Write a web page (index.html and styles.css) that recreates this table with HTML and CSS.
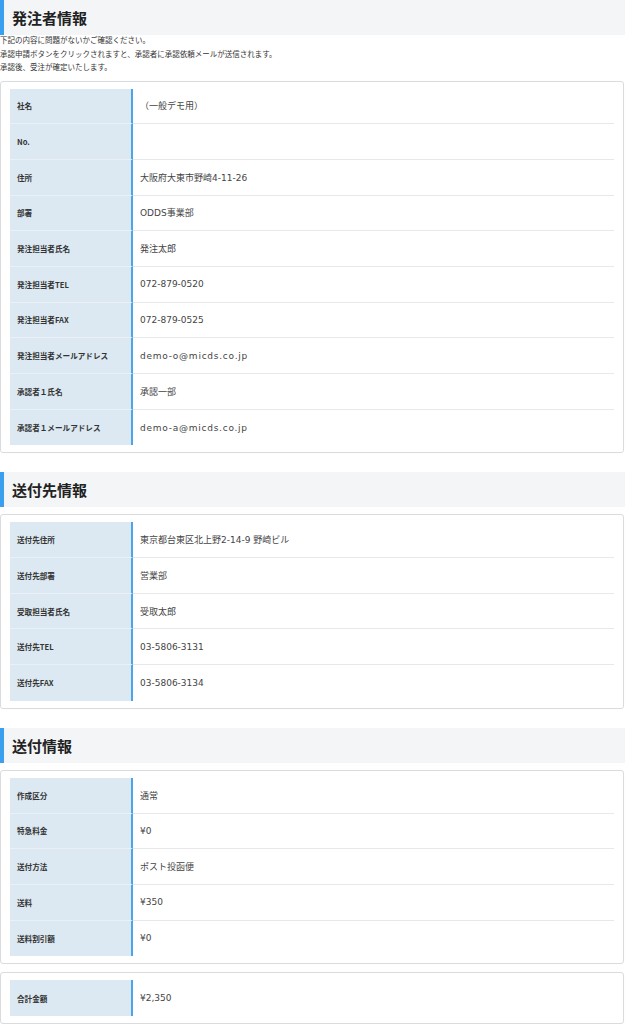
FILE: index.html
```html
<!DOCTYPE html>
<html lang="ja">
<head>
<meta charset="utf-8">
<title>確認</title>
<link rel="stylesheet" href="styles.css">
</head>
<body>
<section class="section">
  <h2 class="sec-title">発注者情報</h2>
  <div class="intro">
    <p>下記の内容に問題がないかご確認ください。</p>
    <p>承認申請ボタンをクリックされますと、承認者に承認依頼メールが送信されます。</p>
    <p>承認後、受注が確定いたします。</p>
  </div>
  <div class="card">
    <div class="row"><div class="label">社名</div><div class="value">（一般デモ用）</div></div>
    <div class="row"><div class="label">No.</div><div class="value"></div></div>
    <div class="row"><div class="label">住所</div><div class="value">大阪府大東市野崎4-11-26</div></div>
    <div class="row"><div class="label">部署</div><div class="value">ODDS事業部</div></div>
    <div class="row"><div class="label">発注担当者氏名</div><div class="value">発注太郎</div></div>
    <div class="row"><div class="label">発注担当者TEL</div><div class="value">072-879-0520</div></div>
    <div class="row"><div class="label">発注担当者FAX</div><div class="value">072-879-0525</div></div>
    <div class="row"><div class="label">発注担当者メールアドレス</div><div class="value value-mail">demo-o@micds.co.jp</div></div>
    <div class="row"><div class="label">承認者１氏名</div><div class="value">承認一部</div></div>
    <div class="row"><div class="label">承認者１メールアドレス</div><div class="value value-mail">demo-a@micds.co.jp</div></div>
  </div>
</section>

<section class="section">
  <h2 class="sec-title">送付先情報</h2>
  <div class="card">
    <div class="row"><div class="label">送付先住所</div><div class="value">東京都台東区北上野2-14-9 野崎ビル</div></div>
    <div class="row"><div class="label">送付先部署</div><div class="value">営業部</div></div>
    <div class="row"><div class="label">受取担当者氏名</div><div class="value">受取太郎</div></div>
    <div class="row"><div class="label">送付先TEL</div><div class="value">03-5806-3131</div></div>
    <div class="row"><div class="label">送付先FAX</div><div class="value">03-5806-3134</div></div>
  </div>
</section>

<section class="section">
  <h2 class="sec-title">送付情報</h2>
  <div class="card">
    <div class="row"><div class="label">作成区分</div><div class="value">通常</div></div>
    <div class="row"><div class="label">特急料金</div><div class="value">¥0</div></div>
    <div class="row"><div class="label">送付方法</div><div class="value">ポスト投函便</div></div>
    <div class="row"><div class="label">送料</div><div class="value">¥350</div></div>
    <div class="row"><div class="label">送料割引額</div><div class="value">¥0</div></div>
  </div>
  <div class="card card-total">
    <div class="row"><div class="label">合計金額</div><div class="value">¥2,350</div></div>
  </div>
</section>
</body>
</html>
```

FILE: styles.css
```css
* { box-sizing: border-box; }

html, body {
  margin: 0;
  padding: 0;
  background: #ffffff;
}

body {
  font-family: "DejaVu Sans", "Noto Sans CJK JP", sans-serif;
  color: #333333;
}

.section {
  display: flex;
  flex-direction: column;
  margin-bottom: 19px;
}

.sec-title {
  margin: 0;
  height: 35px;
  display: flex;
  align-items: center;
  padding-left: 8px;
  background: #f3f5f7;
  border-left: 4px solid #3aa0ee;
  font-family: "Noto Sans CJK JP", sans-serif;
  font-size: 15px;
  font-weight: 700;
  color: #222222;
}

.intro {
  margin-top: -2px;
  font-family: "Noto Sans CJK JP", sans-serif;
  font-size: 7.5px;
  color: #333333;
}

.intro p {
  margin: 0;
  line-height: 13.5px;
}

.card {
  margin-top: 7px;
  width: 624px;
  border: 1px solid #d9dcde;
  border-radius: 3px;
  padding: 7px 9px 7px 9px;
  box-shadow: 0 0 1px rgba(0,0,0,0.06);
}

.card-total {
  margin-top: 8px;
}

.row {
  display: grid;
  grid-template-columns: 123px 1fr;
  height: 35.7px;
}

.label {
  background: #dce9f2;
  border-right: 2px solid #4aa6ea;
  border-bottom: 1px solid #eaf1f6;
  display: flex;
  align-items: center;
  padding-left: 7px;
  font-family: "Noto Sans CJK JP", sans-serif;
  font-size: 7.6px;
  font-weight: 700;
  color: #333333;
}

.value {
  border-bottom: 1px solid #e6e8ea;
  display: flex;
  align-items: center;
  padding-left: 7px;
  font-size: 9px;
  color: #444444;
}

.value-mail {
  letter-spacing: 0.75px;
}

.row:last-child .label,
.row:last-child .value {
  border-bottom: none;
}
```
